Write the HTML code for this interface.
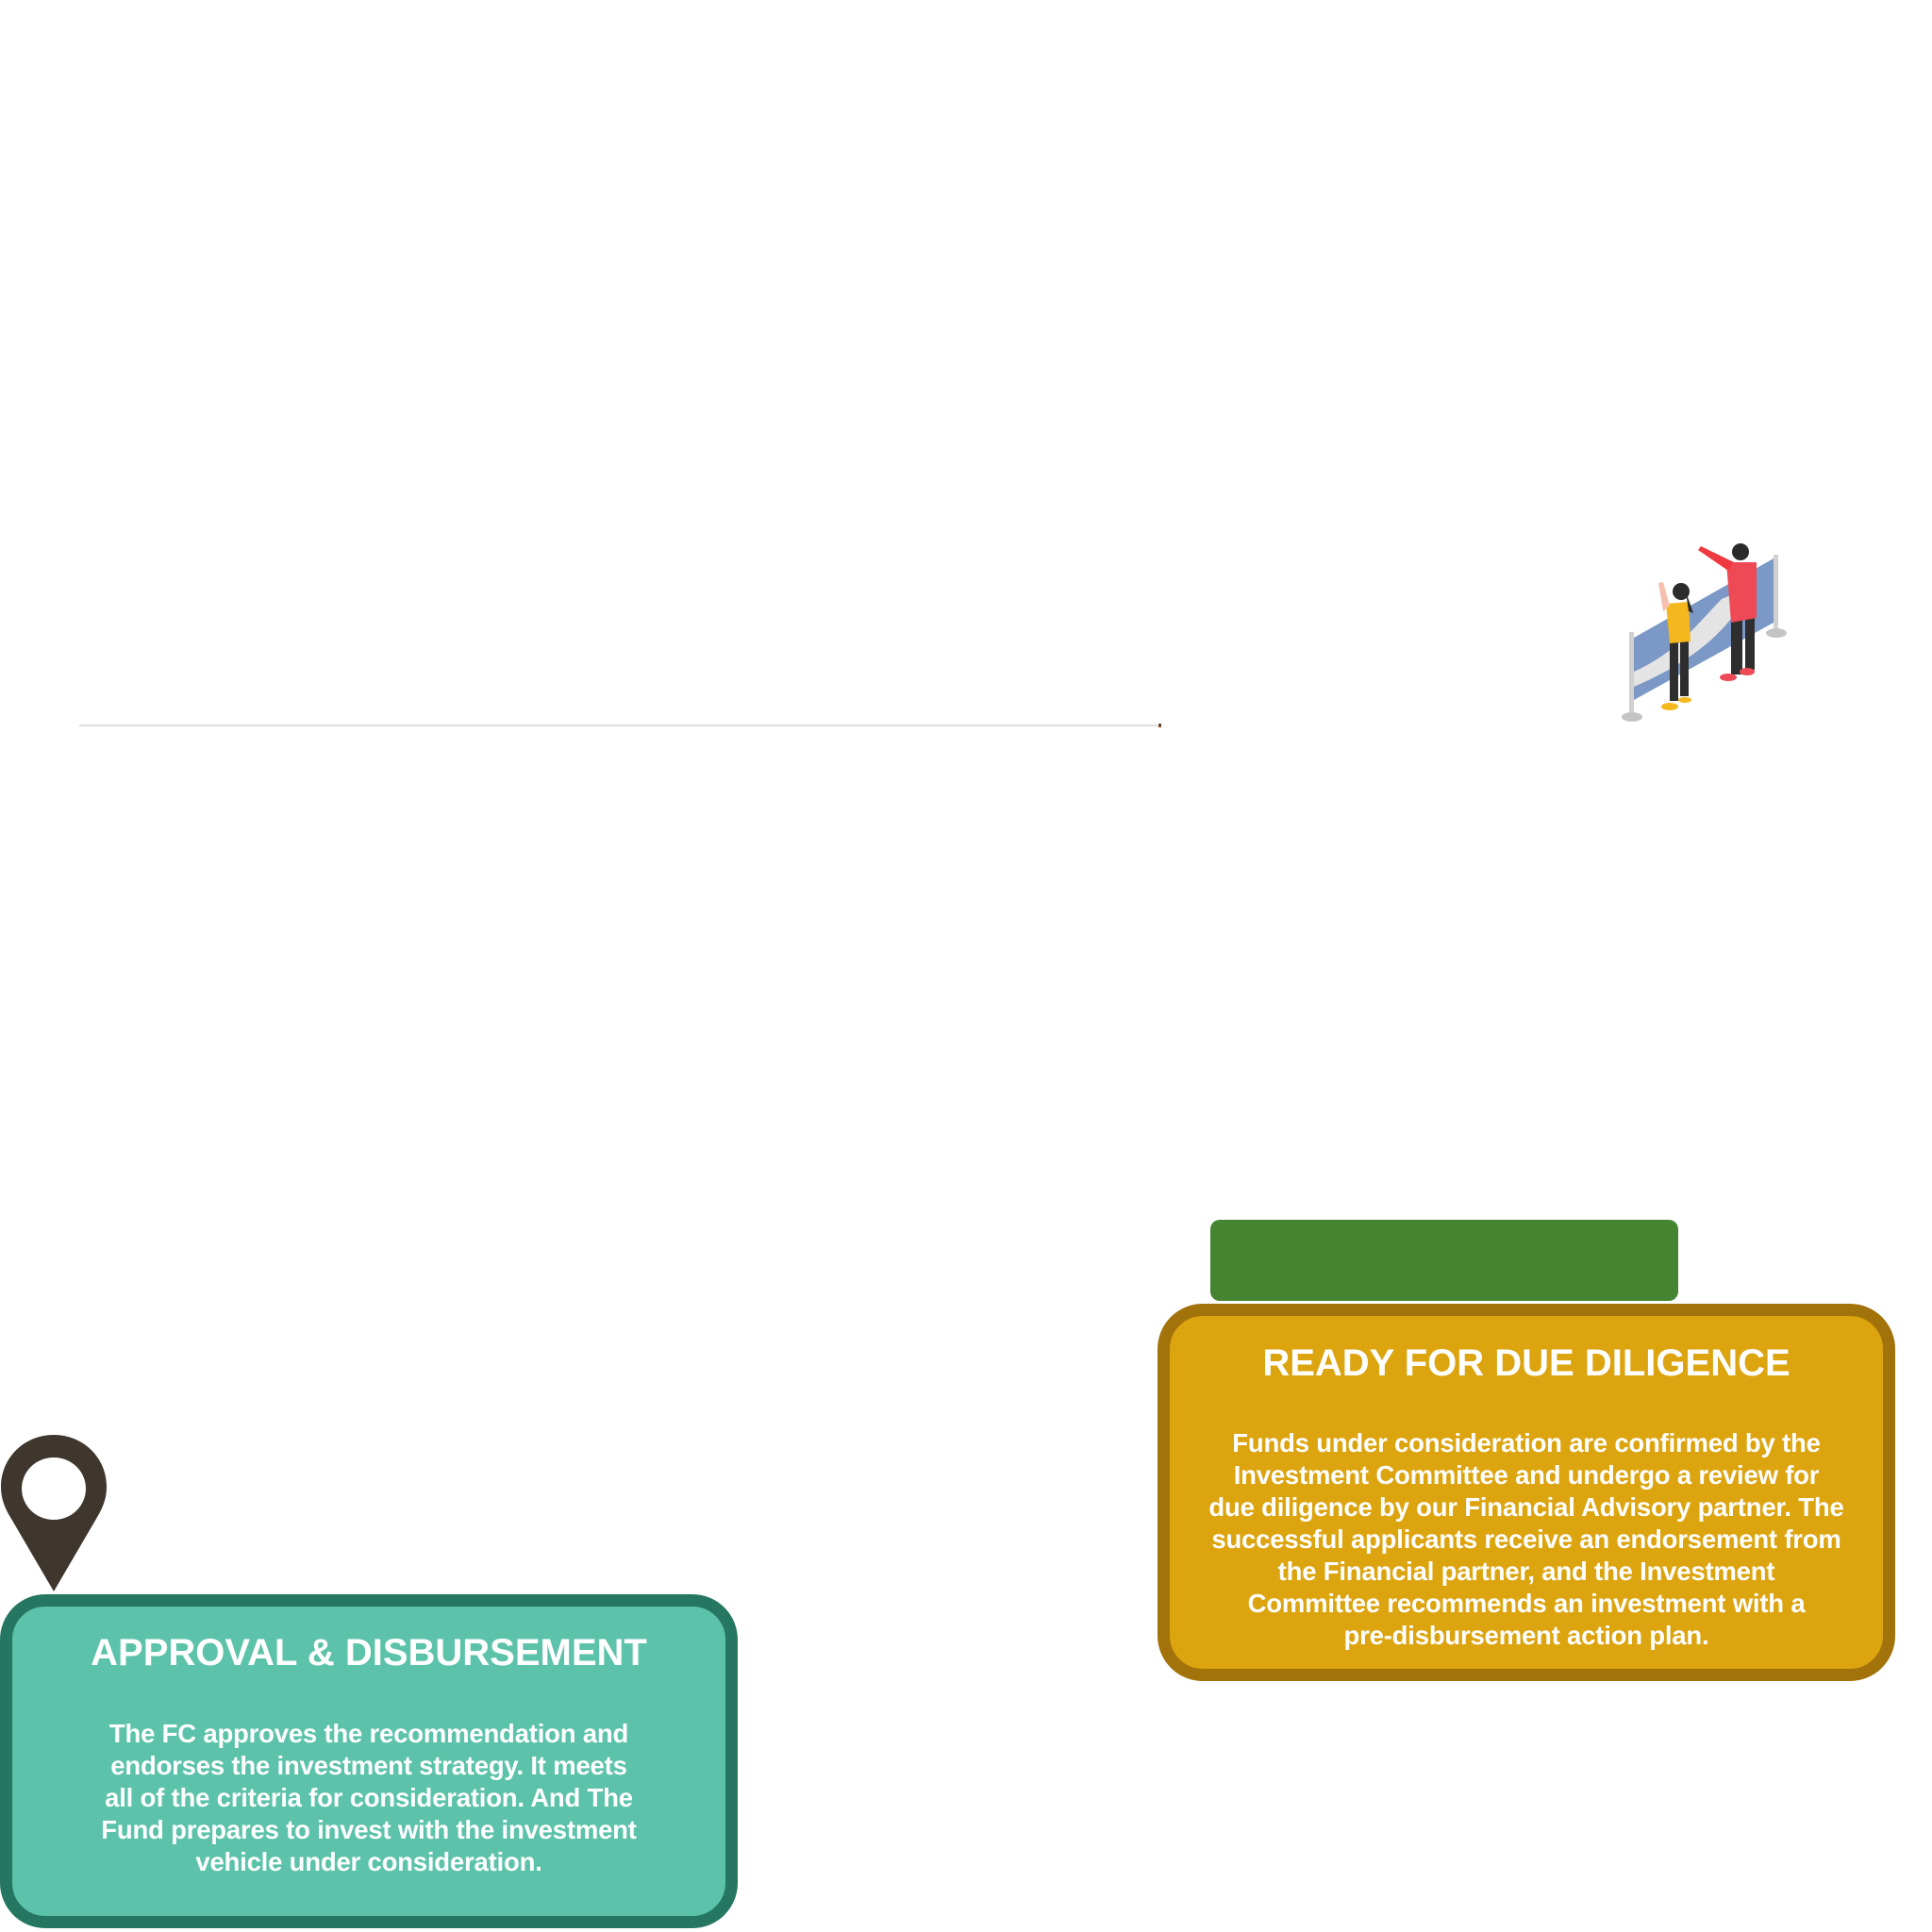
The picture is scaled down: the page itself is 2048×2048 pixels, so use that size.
<!DOCTYPE html>
<html><head><style>
body{margin:0;width:2048px;height:2048px;background:#fff;position:relative;overflow:hidden;font-family:"Liberation Sans",sans-serif;}
.abs{position:absolute}
.box{position:absolute;box-sizing:border-box;color:#fff;text-align:center;font-weight:bold}
.t{font-size:40px;position:absolute;left:0;right:0}
.b{font-size:27.5px;line-height:34px;position:absolute;left:-20px;right:-20px;letter-spacing:-0.2px}
</style></head><body>
<div class="abs" style="left:84px;top:768px;width:1143px;height:2px;background:#e0dede"></div>
<div class="abs" style="left:1228px;top:767px;width:3px;height:4px;background:#6b4a2a"></div>

<svg class="abs" style="left:1700px;top:570px" width="200" height="200" viewBox="1700 570 200 200">
<rect x="1727" y="670" width="5" height="90" fill="#d0d0d0"/>
<ellipse cx="1730" cy="760" rx="11" ry="5" fill="#c4c4c4"/>
<rect x="1880" y="588" width="5" height="82" fill="#d0d0d0"/>
<ellipse cx="1883" cy="671" rx="11" ry="5" fill="#c4c4c4"/>
<polygon points="1732,676 1880,592 1880,660 1732,742" fill="#7b98c6"/>
<path d="M1732,712 C1780,690 1800,660 1825,635 L1860,620 C1840,650 1820,690 1732,728 Z" fill="#e4e4e4"/>
<rect x="1850" y="655" width="10" height="55" fill="#2e2e2e"/><rect x="1835" y="655" width="12" height="60" fill="#2e2e2e"/>
<path d="M1830,596 L1862,596 L1862,655 L1835,660 Z" fill="#ee4a55"/>
<path d="M1832,605 L1800,583 L1803,579 L1838,596 Z" fill="#ee3a40"/>
<circle cx="1845" cy="585" r="9" fill="#2b2b2b"/>
<ellipse cx="1832" cy="718" rx="9" ry="4" fill="#ee4a55"/><ellipse cx="1852" cy="712" rx="8" ry="4" fill="#ee4a55"/>
<rect x="1770" y="678" width="9" height="65" fill="#2e2e2e"/><rect x="1781" y="676" width="9" height="62" fill="#2e2e2e"/>
<path d="M1766,640 L1790,638 L1792,680 L1770,682 Z" fill="#f5b71e"/>
<path d="M1763,648 L1758,618 L1763,617 L1770,642 Z" fill="#f4c0b0"/>
<circle cx="1782" cy="627" r="9" fill="#2b2b2b"/>
<path d="M1787,627 L1795,650 L1790,648 Z" fill="#2b2b2b"/>
<ellipse cx="1770" cy="749" rx="9" ry="4" fill="#f5b71e"/><ellipse cx="1786" cy="742" rx="7" ry="3" fill="#f5b71e"/>
</svg>

<div class="abs" style="left:1283px;top:1293px;width:496px;height:86px;background:#458430;border-radius:10px"></div>

<div class="box" style="left:1227px;top:1382px;width:782px;height:400px;background:#dca40f;border:13px solid #a2730b;border-radius:48px">
<div class="t" style="top:28px">READY FOR DUE DILIGENCE</div>
<div class="b" style="top:118px">Funds under consideration are confirmed by the<br>Investment Committee and undergo a review for<br>due diligence by our Financial Advisory partner. The<br>successful applicants receive an endorsement from<br>the Financial partner, and the Investment<br>Committee recommends an investment with a<br>pre-disbursement action plan.</div>
</div>

<svg class="abs" style="left:0;top:1520px" width="114" height="168" viewBox="0 0 114 168">
<path d="M57,1 C26,1 1,25 1,56 C1,70 6,80 12,90 L57,167 L102,90 C108,80 113,70 113,56 C113,25 88,1 57,1 Z" fill="#3f362d"/>
<ellipse cx="57" cy="58" rx="34" ry="33" fill="#fff"/>
</svg>

<div class="box" style="left:0;top:1690px;width:782px;height:354px;background:#5cc2aa;border:13px solid #257761;border-radius:48px">
<div class="t" style="top:27px">APPROVAL &amp; DISBURSEMENT</div>
<div class="b" style="top:118px">The FC approves the recommendation and<br>endorses the investment strategy. It meets<br>all of the criteria for consideration. And The<br>Fund prepares to invest with the investment<br>vehicle under consideration.</div>
</div>
</body></html>
